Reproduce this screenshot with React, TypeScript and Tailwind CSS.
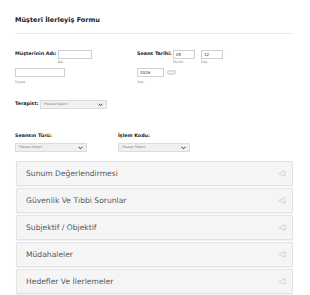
import React from "react";

const font = { fontFamily: '"DejaVu Sans", Verdana, sans-serif' };

function Select({ w }: { w: string }) {
  return (
    <div className={`${w} h-[9px] bg-[#f0f0f0] border border-[#dcdcdc] flex items-center justify-between px-[3px]`}>
      <span className="text-[3.5px] text-[#888] leading-none">Please Select</span>
      <svg width="5" height="4" viewBox="0 0 5 4">
        <path d="M0.6 0.8 L2.5 2.8 L4.4 0.8" fill="none" stroke="#333" strokeWidth="1" />
      </svg>
    </div>
  );
}

function Row({ title }: { title: string }) {
  return (
    <div className="h-[25px] bg-[#f5f5f5] border border-[#e2e2e2] rounded-[1px] shadow-[0_1px_1px_rgba(0,0,0,0.06)] flex items-center justify-between pl-[9px] pr-[6px]">
      <span className="text-[7.6px] text-[#555] leading-none">{title}</span>
      <svg width="8" height="7" viewBox="0 0 8 7">
        <path d="M7 0.7 L0.9 3.5 L7 6.3 Z" fill="none" stroke="#cfcfcf" strokeWidth="0.9" strokeLinejoin="round" />
      </svg>
    </div>
  );
}

export default function App() {
  return (
    <div className="w-[310px] h-[295px] bg-white overflow-hidden" style={font}>
      <div className="pl-[15px] pr-[17px]">
        <div className="pt-[16px] text-[6.5px] font-bold text-[#222] leading-[8px]">Müşteri İlerleyiş Formu</div>
        <div className="mt-[9px] h-px bg-[#eaeaea]" />

        <div className="mt-[16px] flex">
          <div className="w-[122px]">
            <div className="flex items-center">
              <span className="text-[4.8px] font-bold text-[#222] leading-none w-[43px]">Müşterinin Adı:</span>
              <div className="w-[34px] h-[9px] border border-[#cfcfcf] bg-white" />
            </div>
            <div className="pl-[43px] mt-[1px] text-[3.3px] text-[#888] leading-[5px]">Adı</div>
            <div className="mt-[3px] w-[50px] h-[9px] border border-[#cfcfcf] bg-white" />
            <div className="mt-[3px] text-[3.3px] text-[#888] leading-[5px]">Soyad</div>
          </div>
          <div>
            <div className="flex items-center">
              <span className="text-[4.8px] font-bold text-[#222] leading-none w-[36px]">Seans Tarihi:</span>
              <div className="w-[22px] h-[9px] border border-[#cfcfcf] bg-white flex items-center pl-[2px] text-[4px] text-[#333]">05</div>
              <span className="w-[6px] text-center text-[4px] text-[#999]">-</span>
              <div className="w-[22px] h-[9px] border border-[#cfcfcf] bg-white flex items-center pl-[2px] text-[4px] text-[#333]">12</div>
              <span className="w-[6px] text-center text-[4px] text-[#999]">-</span>
            </div>
            <div className="flex mt-[1px] text-[3.3px] text-[#888] leading-[5px]">
              <span className="pl-[36px] w-[64px]">Month</span>
              <span>Day</span>
            </div>
            <div className="mt-[3px] flex items-center">
              <div className="w-[27px] h-[9px] border border-[#cfcfcf] bg-white flex items-center pl-[2px] text-[4px] text-[#333]">2026</div>
              <svg className="ml-[3px]" width="9" height="5" viewBox="0 0 9 5">
                <rect x="0.5" y="0.8" width="8" height="3.2" rx="1.4" fill="#f4f4f4" stroke="#aaa" strokeWidth="0.7" />
              </svg>
            </div>
            <div className="mt-[3px] text-[3.3px] text-[#888] leading-[5px]">Year</div>
          </div>
        </div>

        <div className="mt-[15px] flex items-center">
          <span className="text-[4.8px] font-bold text-[#222] leading-none w-[25px]">Terapist:</span>
          <Select w="w-[67px]" />
        </div>

        <div className="mt-[24px] flex">
          <div className="w-[103px]">
            <div className="text-[4.8px] font-bold text-[#222] leading-[6px]">Seansın Türü:</div>
            <div className="mt-[4px]"><Select w="w-[72px]" /></div>
          </div>
          <div>
            <div className="text-[4.8px] font-bold text-[#222] leading-[6px]">İşlem Kodu:</div>
            <div className="mt-[4px]"><Select w="w-[72px]" /></div>
          </div>
        </div>

        <div className="mt-[9px] ml-[1px] flex flex-col gap-[2px]">
          <Row title="Sunum Değerlendirmesi" />
          <Row title="Güvenlik Ve Tıbbi Sorunlar" />
          <Row title="Subjektif / Objektif" />
          <Row title="Müdahaleler" />
          <Row title="Hedefler Ve İlerlemeler" />
        </div>
      </div>
    </div>
  );
}
